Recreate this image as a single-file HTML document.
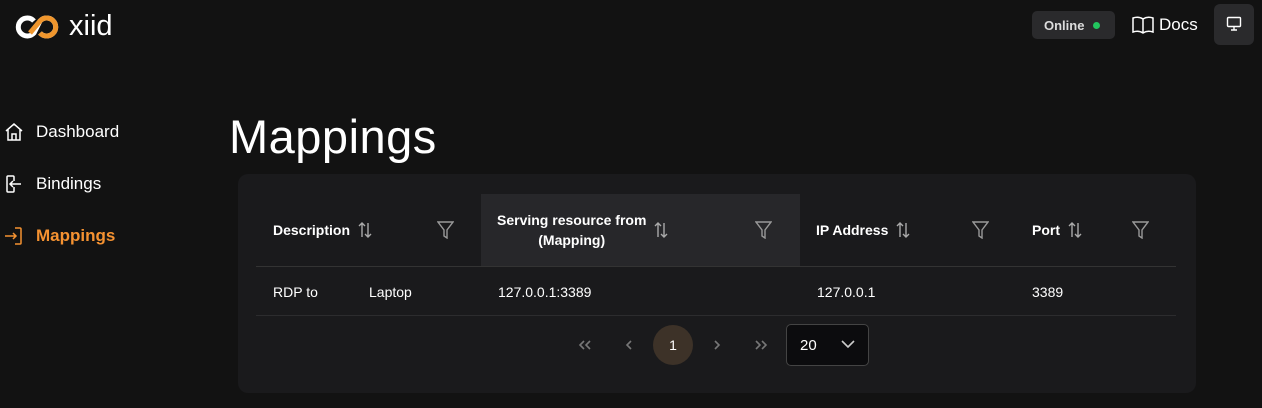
<!DOCTYPE html>
<html><head><style>
*{margin:0;padding:0;box-sizing:border-box}
body{width:1262px;height:408px;background:#121212;color:#fff;font-family:"Liberation Sans",sans-serif;position:relative;overflow:hidden}
.abs{position:absolute}
.nav{position:absolute;left:4px;font-size:17px;display:flex;align-items:center;gap:12px}
.th{position:absolute;top:194px;height:72px;font-weight:bold;font-size:14px;display:flex;align-items:center}
.td{position:absolute;top:284px;font-size:14px}
.sort{margin-left:8px;display:inline-block}
</style></head><body>
<svg class="abs" style="left:6px;top:12px" width="62" height="30" viewBox="0 0 62 30">
<path d="M28 9 A9 9 0 1 0 28 21 L34 9 A9 9 0 1 1 34 21" fill="none" stroke="#fff" stroke-width="5"/>
<path d="M24 21 L34 9 A9 9 0 1 1 34 21" fill="none" stroke="#f0962d" stroke-width="5"/>
</svg>
<div class="abs" style="left:69px;top:10px;font-size:29px;color:#fff">xiid</div>
<div class="abs" style="left:1032px;top:11px;width:83px;height:28px;background:#2a2a2c;border-radius:5px;font-size:13px;font-weight:bold;color:#ddd;padding:7px 0 0 12px">Online <span style="display:inline-block;width:7px;height:7px;border-radius:50%;background:#22c55e;margin-left:5px;vertical-align:1px"></span></div>
<svg class="abs" style="left:1132px;top:15px" width="22" height="20" viewBox="0 0 22 20" fill="none" stroke="#fff" stroke-width="1.5"><path d="M11 4 C8 2 4 2 1 3 V17 C4 16 8 16 11 18 C14 16 18 16 21 17 V3 C18 2 14 2 11 4 Z M11 4 V18"/></svg>
<div class="abs" style="left:1159px;top:15px;font-size:17px">Docs</div>
<div class="abs" style="left:1214px;top:4px;width:40px;height:41px;background:#2a2a2c;border-radius:6px"></div>
<svg class="abs" style="left:1226px;top:16px" width="16" height="16" viewBox="0 0 16 16" fill="none" stroke="#fff" stroke-width="1.4"><rect x="1.5" y="1.5" width="13" height="9" rx="1"/><path d="M8 11v3M5 14h6"/></svg>

<div class="nav" style="top:122px"><svg width="20" height="20" viewBox="0 0 20 20" fill="none" stroke="#fff" stroke-width="1.5"><path d="M2 9 L10 2 L18 9 M4 7.5 V18 H16 V7.5 M8 18 V12 H12 V18"/></svg><span>Dashboard</span></div>
<div class="nav" style="top:174px"><svg width="20" height="20" viewBox="0 0 20 20" fill="none" stroke="#fff" stroke-width="1.5"><path d="M9 2 H4 Q3 2 3 3 V17 Q3 18 4 18 H9 Q10 18 10 17 V13 M10 7 V3 Q10 2 9 2 M17 10 H6 M9 7 L6 10 L9 13"/></svg><span>Bindings</span></div>
<div class="nav" style="top:226px;color:#f59231;font-weight:bold"><svg width="20" height="20" viewBox="0 0 20 20" fill="none" stroke="#f59231" stroke-width="1.5"><path d="M11 2 H16 Q17 2 17 3 V17 Q17 18 16 18 H11 M1 10 H12 M9 7 L12 10 L9 13"/></svg><span>Mappings</span></div>

<div class="abs" style="left:229px;top:109px;font-size:47px;letter-spacing:0.5px">Mappings</div>

<div class="abs" style="left:238px;top:174px;width:958px;height:219px;background:#1a1a1c;border-radius:10px"></div>
<div class="abs" style="left:481px;top:194px;width:319px;height:72px;background:#27272a"></div>
<div class="abs" style="left:256px;top:266px;width:920px;height:1px;background:#333"></div>
<div class="abs" style="left:256px;top:315px;width:920px;height:1px;background:#2c2c2e"></div>

<div class="th" style="left:273px">Description<svg class="sort" width="14" height="16" viewBox="0 0 14 16" fill="none" stroke="#aaa" stroke-width="1.4"><path d="M4 15 V1 M1 4 L4 1 L7 4 M10 1 V15 M7 12 L10 15 L13 12"/></svg></div>
<div class="th" style="left:497px;text-align:center;line-height:20px"><div>Serving resource from<br>(Mapping)</div><svg class="sort" width="14" height="16" viewBox="0 0 14 16" fill="none" stroke="#aaa" stroke-width="1.4"><path d="M4 15 V1 M1 4 L4 1 L7 4 M10 1 V15 M7 12 L10 15 L13 12"/></svg></div>
<div class="th" style="left:816px">IP Address<svg class="sort" width="14" height="16" viewBox="0 0 14 16" fill="none" stroke="#aaa" stroke-width="1.4"><path d="M4 15 V1 M1 4 L4 1 L7 4 M10 1 V15 M7 12 L10 15 L13 12"/></svg></div>
<div class="th" style="left:1032px">Port<svg class="sort" width="14" height="16" viewBox="0 0 14 16" fill="none" stroke="#aaa" stroke-width="1.4"><path d="M4 15 V1 M1 4 L4 1 L7 4 M10 1 V15 M7 12 L10 15 L13 12"/></svg></div>
<svg class="abs" style="left:437px;top:221px" width="17" height="18" viewBox="0 0 17 18" fill="none" stroke="#999" stroke-width="1.4"><path d="M1 1 H16 L10 9 V17 L7 15 V9 Z"/></svg>
<svg class="abs" style="left:755px;top:221px" width="17" height="18" viewBox="0 0 17 18" fill="none" stroke="#999" stroke-width="1.4"><path d="M1 1 H16 L10 9 V17 L7 15 V9 Z"/></svg>
<svg class="abs" style="left:972px;top:221px" width="17" height="18" viewBox="0 0 17 18" fill="none" stroke="#999" stroke-width="1.4"><path d="M1 1 H16 L10 9 V17 L7 15 V9 Z"/></svg>
<svg class="abs" style="left:1132px;top:221px" width="17" height="18" viewBox="0 0 17 18" fill="none" stroke="#999" stroke-width="1.4"><path d="M1 1 H16 L10 9 V17 L7 15 V9 Z"/></svg>

<div class="td" style="left:273px">RDP to</div>
<div class="td" style="left:369px">Laptop</div>
<div class="td" style="left:498px">127.0.0.1:3389</div>
<div class="td" style="left:817px">127.0.0.1</div>
<div class="td" style="left:1032px">3389</div>

<svg class="abs" style="left:578px;top:340px" width="14" height="10" viewBox="0 0 14 10" fill="none" stroke="#777" stroke-width="1.6"><path d="M6 1 L2 5 L6 9 M12 1 L8 5 L12 9"/></svg>
<svg class="abs" style="left:625px;top:340px" width="8" height="10" viewBox="0 0 8 10" fill="none" stroke="#777" stroke-width="1.6"><path d="M6 1 L2 5 L6 9"/></svg>
<div class="abs" style="left:653px;top:325px;width:40px;height:40px;border-radius:50%;background:#3d3228;text-align:center;line-height:40px;font-size:14px">1</div>
<svg class="abs" style="left:713px;top:340px" width="8" height="10" viewBox="0 0 8 10" fill="none" stroke="#777" stroke-width="1.6"><path d="M2 1 L6 5 L2 9"/></svg>
<svg class="abs" style="left:754px;top:340px" width="14" height="10" viewBox="0 0 14 10" fill="none" stroke="#777" stroke-width="1.6"><path d="M2 1 L6 5 L2 9 M8 1 L12 5 L8 9"/></svg>
<div class="abs" style="left:786px;top:324px;width:83px;height:42px;border:1px solid #444;border-radius:5px;background:#0c0c0e;font-size:15px;padding:12px 0 0 13px">20</div>
<svg class="abs" style="left:841px;top:339px" width="14" height="10" viewBox="0 0 14 10" fill="none" stroke="#ccc" stroke-width="1.6"><path d="M1 2 L7 8 L13 2"/></svg>
</body></html>
